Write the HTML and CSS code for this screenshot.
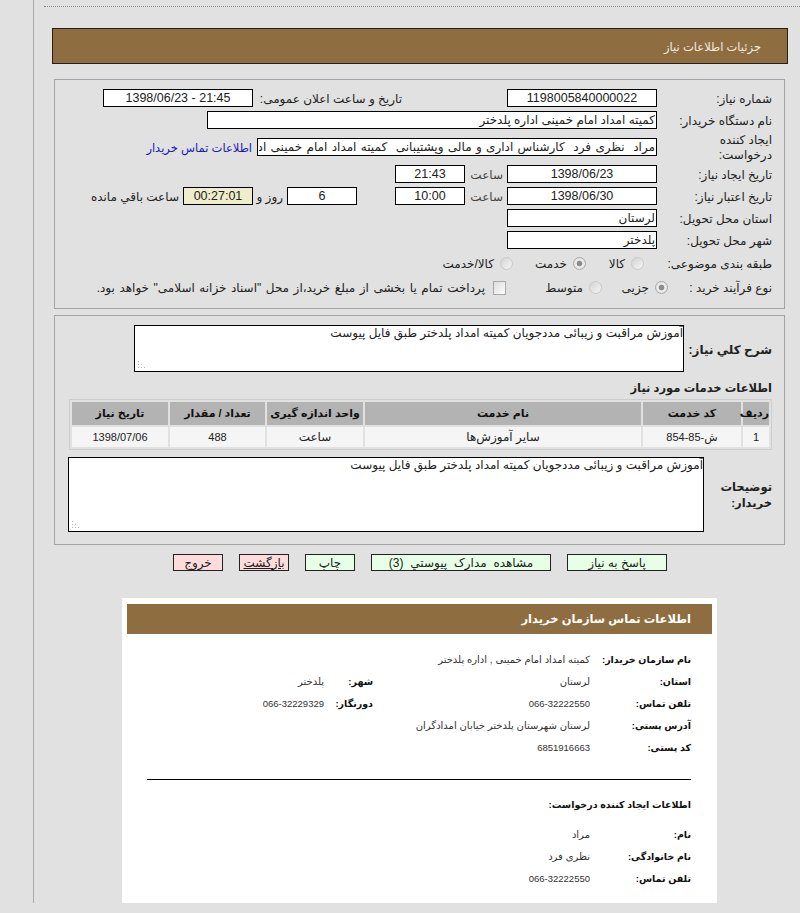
FILE: index.html
```html
<!DOCTYPE html>
<html lang="fa" dir="rtl">
<head>
<meta charset="utf-8">
<title>جزئیات اطلاعات نیاز</title>
<link rel="stylesheet" href="styles.css">
</head>
<body>
<div class="shell">
  <div class="dots"></div>
  <div class="title-bar">جزئیات اطلاعات نیاز</div>

  <section class="panel panel-form">
    <div class="row row-1">
      <label class="lbl">شماره نیاز:</label>
      <input class="box w150 center" readonly value="1198005840000022">
      <span class="pub-lbl">تاریخ و ساعت اعلان عمومی:</span>
      <input class="box w150 center ltr" readonly value="1398/06/23 - 21:45">
    </div>
    <div class="row row-2">
      <label class="lbl">نام دستگاه خریدار:</label>
      <input class="box w450" readonly value="کمیته امداد امام خمینی اداره پلدختر">
    </div>
    <div class="row row-3">
      <label class="lbl two">ایجاد کننده درخواست:</label>
      <input class="box w400 spaced" readonly value="مراد  نظری فرد  کارشناس اداری و مالی وپشتیبانی  کمیته امداد امام خمینی اداره پلدختر">
      <a class="link" href="#">اطلاعات تماس خریدار</a>
    </div>
    <div class="row row-4">
      <label class="lbl">تاریخ ایجاد نیاز:</label>
      <input class="box w150 center" readonly value="1398/06/23">
      <span class="hour">ساعت</span>
      <input class="box w70 center" readonly value="21:43">
    </div>
    <div class="row row-5">
      <label class="lbl">تاریخ اعتبار نیاز:</label>
      <input class="box w150 center" readonly value="1398/06/30">
      <span class="hour">ساعت</span>
      <input class="box w70 center" readonly value="10:00">
      <input class="box w70 center days" readonly value="6">
      <span class="txt-day">روز و</span>
      <input class="box w70 center timer" readonly value="00:27:01">
      <span class="txt-left">ساعت باقي مانده</span>
    </div>
    <div class="row row-6">
      <label class="lbl">استان محل تحویل:</label>
      <input class="box w150" readonly value="لرستان">
    </div>
    <div class="row row-7">
      <label class="lbl">شهر محل تحویل:</label>
      <input class="box w150" readonly value="پلدختر">
    </div>
    <div class="row row-8">
      <label class="lbl">طبقه بندی موضوعی:</label>
      <span class="opt opt-kala"><input type="radio" class="radio" disabled>کالا</span>
      <span class="opt opt-khed"><input type="radio" class="radio" checked disabled>خدمت</span>
      <span class="opt"><input type="radio" class="radio" disabled>کالا/خدمت</span>
    </div>
    <div class="row row-9">
      <label class="lbl">نوع فرآیند خرید :</label>
      <span class="opt opt-jozi"><input type="radio" class="radio" checked disabled>جزیی</span>
      <span class="opt opt-mota"><input type="radio" class="radio" disabled>متوسط</span>
      <span class="opt opt-wide"><input type="checkbox" class="check" disabled>پرداخت تمام یا بخشی از مبلغ خرید،از محل "اسناد خزانه اسلامی" خواهد بود.</span>
    </div>
  </section>

  <section class="panel panel-desc">
    <div class="desc-row desc-1">
      <label class="strong lbl-desc">شرح کلي نیاز:</label>
      <textarea class="area area-1" readonly>آموزش مراقبت و زیبائی مددجویان کمیته امداد پلدختر طبق فایل پیوست</textarea>
    </div>
    <h3 class="strong section-head">اطلاعات خدمات مورد نیاز</h3>
    <table class="items">
      <thead>
        <tr>
          <th class="c-row">ردیف</th>
          <th class="c-code">کد خدمت</th>
          <th class="c-name">نام خدمت</th>
          <th class="c-unit">واحد اندازه گیری</th>
          <th class="c-qty">تعداد / مقدار</th>
          <th class="c-date">تاریخ نیاز</th>
        </tr>
      </thead>
      <tbody>
        <tr>
          <td class="num">1</td>
          <td class="num">ش-85-854</td>
          <td>سایر آموزش‌ها</td>
          <td>ساعت</td>
          <td class="num">488</td>
          <td class="num">1398/07/06</td>
        </tr>
      </tbody>
    </table>
    <div class="desc-row desc-2">
      <label class="strong lbl-buyer">توضیحات خریدار:</label>
      <textarea class="area area-2" readonly>آموزش مراقبت و زیبائی مددجویان کمیته امداد پلدختر طبق فایل پیوست</textarea>
    </div>
  </section>

  <div class="actions">
    <button class="btn green w100">پاسخ به نیاز</button>
    <button class="btn green w180">مشاهده مدارک پیوستي (3)</button>
    <button class="btn green w50">چاپ</button>
    <button class="btn pink w50 under">بازگشت</button>
    <button class="btn pink w50">خروج</button>
  </div>

  <section class="card">
    <div class="card-head">اطلاعات تماس سازمان خریدار</div>
    <div class="card-body">
      <div class="c-line"><b>نام سازمان خریدار:</b><span>کمیته امداد امام خمینی , اداره پلدختر</span></div>
      <div class="c-line"><b>استان:</b><span class="val-s">لرستان</span><b class="b2">شهر:</b><span>پلدختر</span></div>
      <div class="c-line"><b>تلفن تماس:</b><span class="val-s c-num">066-32222550</span><b class="b2">دورنگار:</b><span class="c-num">066-32229329</span></div>
      <div class="c-line"><b>آدرس پستی:</b><span>لرستان شهرستان پلدختر خیابان امدادگران</span></div>
      <div class="c-line"><b>کد پستی:</b><span class="c-num">6851916663</span></div>
      <hr class="rule">
      <div class="c-sub">اطلاعات ایجاد کننده درخواست:</div>
      <div class="c-line"><b>نام:</b><span>مراد</span></div>
      <div class="c-line"><b>نام خانوادگی:</b><span>نظری فرد</span></div>
      <div class="c-line"><b>تلفن تماس:</b><span class="c-num">066-32222550</span></div>
    </div>
  </section>
</div>
</body>
</html>
```
FILE: styles.css
```css
* { box-sizing: border-box; }
html, body { margin: 0; padding: 0; }
body {
  background: #e1e1e1;
  color: #222;
  font-family: "Liberation Sans", "DejaVu Sans", sans-serif;
  font-size: 12px;
  width: 800px;
  height: 913px;
  overflow: hidden;
}
.shell {
  margin-right: 0;
  margin-left: 33px;
  width: 767px;
  height: 903px;
  border-left: 1px solid #a9a9a9;
  display: flow-root;
  padding-top: 6px;
}
.dots {
  margin-right: 0;
  margin-left: 10px;
  border-top: 1px dotted #8a8a8a;
  height: 1px;
}
.title-bar {
  width: 736px;
  height: 36px;
  margin: 21px 12px 0 0;
  background: #8e6d41;
  border: 1px solid #2a2015;
  color: #f2ece0;
  font-size: 11.5px;
  line-height: 36px;
  padding-right: 26px;
}
.panel {
  width: 731px;
  margin-right: 15px;
  border: 1px solid #a3a3a3;
}
.panel-form { height: 230px; margin-top: 15px; padding: 9px 12px 0 0; }
.row { display: flex; align-items: center; height: 18px; margin-bottom: 4px; white-space: nowrap; }
.row-3 { margin-top: 9px; margin-bottom: 9px; }
.row-8 { margin-top: 3px; height: 20px; }
.row-9 { height: 20px; }
.lbl { width: 115px; flex: none; padding-top: 2px; }
.two { white-space: normal; line-height: 15px; padding: 2px 0 0 30px; }
.box {
  height: 18px;
  border: 1px solid #000;
  background: #fff;
  padding: 0 1px;
  font: 12.5px "Liberation Sans", "DejaVu Sans", sans-serif;
  color: #222;
  border-radius: 0;
  outline: none;
  flex: none;
  direction: rtl;
}
.box:not(.center) { font-size: 12px; }
.center { text-align: center; }
.box.ltr { direction: ltr; }
.spaced { word-spacing: 1px; }
.w150 { width: 150px; }
.w450 { width: 450px; }
.w400 { width: 400px; }
.w70 { width: 70px; }
.pub-lbl { width: 149px; margin-right: 105px; flex: none; padding-top: 2px; white-space: nowrap; }
.link { color: #1a1ab8; text-decoration: none; margin-right: 5px; padding-top: 2px; font-size: 11.5px; }
.hour { width: 42px; flex: none; padding: 2px 4px 0 0; color: #444; }
.days { margin-right: 38px; }
.txt-day { width: 34px; flex: none; padding: 2px 4px 0 0; }
.timer { background: #eeeecc; }
.txt-left { margin-right: 4px; padding-top: 2px; }
.row-8 .opt-kala { width: 58px; margin-right: 13px; }
.row-8 .opt-khed { width: 73px; }
.row-9 .opt-jozi { width: 66px; margin-right: -11px; }
.row-9 .opt-mota { width: 96px; }
.opt-wide { word-spacing: 1.2px; }
.opt { display: inline-flex; align-items: center; flex: none; padding-top: 1px; }
.radio, .check {
  appearance: none;
  -webkit-appearance: none;
  margin: 0 0 0 6px;
  flex: none;
  background: linear-gradient(135deg, #d3d3d3, #f6f6f6);
}
.radio { width: 13px; height: 13px; border-radius: 50%; border: 1px solid #c9c9c9; }
.radio:checked { background: radial-gradient(circle, #8a8a8a 0 2.5px, #eee 3.2px, #d8d8d8 100%); border-color: #a8a8a8; }
.check { width: 13px; height: 14px; border: 1px solid #a8a8a8; background: linear-gradient(135deg, #dcdcdc, #fdfdfd); margin-left: 8px; }
.panel-desc { height: 230px; margin-top: 6px; padding: 9px 12px 0 0; }
.strong { font-weight: bold; font-size: 12px; margin: 0; }
.desc-row { display: flex; align-items: center; }
.lbl-desc { width: 88px; flex: none; padding-top: 2px; }
.area {
  display: block;
  border: 1px solid #000;
  padding: 0;
  margin: 0;
  font: 12px/15px "Liberation Sans", "DejaVu Sans", sans-serif;
  color: #222;
  border-radius: 0;
  outline: none;
  resize: none;
  flex: none;
  overflow: hidden;
  background: #fff url("data:image/svg+xml,%3Csvg xmlns='http://www.w3.org/2000/svg' width='9' height='9' fill='%23b5b5b5'%3E%3Crect x='0' y='0' width='1' height='1'/%3E%3Crect x='0' y='3' width='1' height='1'/%3E%3Crect x='0' y='6' width='1' height='1'/%3E%3Crect x='3' y='3' width='1' height='1'/%3E%3Crect x='3' y='6' width='1' height='1'/%3E%3Crect x='6' y='6' width='1' height='1'/%3E%3C/svg%3E") no-repeat left 3px bottom 1px;
}
.area-1 { width: 550px; height: 47px; }
.area-2 { width: 636px; height: 75px; }
.section-head { margin-top: 8px; height: 14px; line-height: 17px; font-size: 11.5px; }
.items {
  width: 703px;
  margin: 5px 0 0 0;
  border-collapse: separate;
  border-spacing: 2px;
  border: 1px solid #cdcdcd;
  table-layout: fixed;
  font-size: 12px;
}
.items th {
  background: #b3b3b3;
  height: 23px;
  padding: 0;
  font-size: 11px;
  font-weight: bold;
  color: #111;
}
.items td {
  background: #f5f5f5;
  height: 20px;
  padding: 0;
  text-align: center;
}
.items .num { font-size: 11px; }
.c-row { width: 26px; }
.c-code { width: 98px; }
.c-name { width: 276px; }
.c-unit { width: 96px; }
.c-qty { width: 95px; }
.c-date { width: 96px; }
.desc-2 { margin-top: 7px; }
.lbl-buyer { width: 68px; flex: none; line-height: 16px; font-size: 11.5px; }
.actions {
  display: flex;
  gap: 16px;
  margin: 9px 133px 0 0;
}
.btn {
  height: 17px;
  border: 1px solid #222;
  padding: 0;
  font: 12px/14px "Liberation Sans", "DejaVu Sans", sans-serif;
  color: #222;
  border-radius: 0;
}
.w180 { word-spacing: 3.5px; }
.green { background: #e6ffe6; }
.pink { background: #ffdcdc; }
.under { text-decoration: underline; }
.w100 { width: 100px; }
.w180 { width: 180px; }
.w50 { width: 50px; }
.card {
  width: 595px;
  height: 305px;
  margin: 27px 83px 0 0;
  background: #fff;
  padding: 6px 5px 0;
  overflow: hidden;
}
.card-head {
  background: #8e6d41;
  height: 30px;
  line-height: 31px;
  color: #fff;
  font-weight: bold;
  font-size: 11.5px;
  padding-right: 21px;
}
.card-body { padding: 14px 21px 0 20px; font-size: 10px; color: #333; }
.c-line { display: flex; align-items: center; height: 22px; }
.c-line b { width: 101px; flex: none; font-size: 9.5px; color: #111; }
.c-line .val-s { width: 217px; flex: none; }
.c-line .b2 { width: 49px; }
.c-num { font-size: 9.5px; }
.rule { border: 0; border-top: 1px solid #000; margin: 21px 0 0 0; height: 1px; }
.c-sub { font-weight: bold; font-size: 9.5px; color: #111; margin: 18px 0 12px; height: 13px; line-height: 13px; }
```
